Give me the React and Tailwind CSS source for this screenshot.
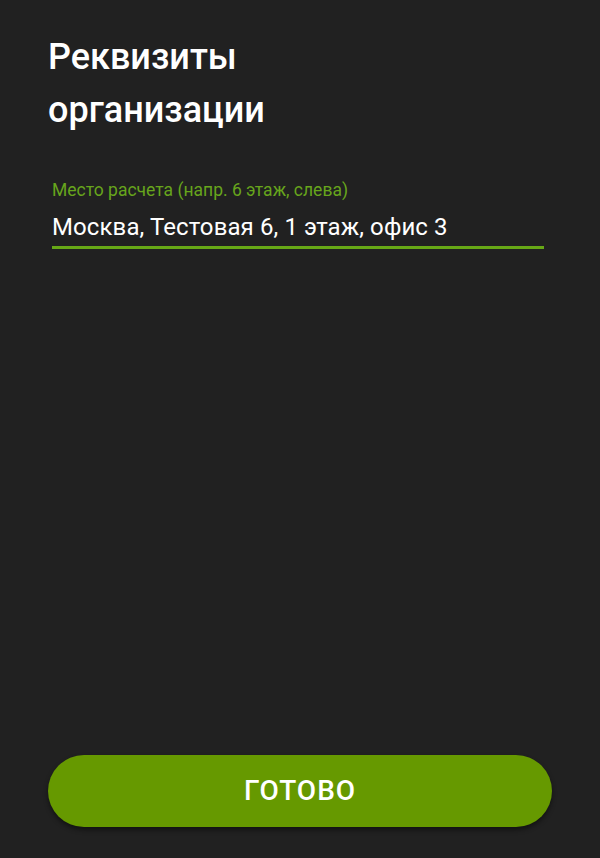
import React from 'react';

export default function App() {
  return (
    <div
      className="flex h-[858px] w-[600px] flex-col bg-[#212121] text-white"
      style={{ fontFamily: 'Roboto, "Noto Sans", sans-serif' }}
    >
      {/* Header */}
      <h1 className="pl-[48px] pt-[31px] text-[36px] font-medium leading-[53px]">
        Реквизиты
        <br />
        организации
      </h1>

      {/* Text field */}
      <div className="ml-[52px] mr-[56px] mt-[43px] flex flex-col">
        <label className="text-[17.5px] leading-[20px] text-[#67a51c]">
          Место расчета (напр. 6 этаж, слева)
        </label>
        <div className="mt-[11px] text-[24px] leading-[32px] tracking-[0.1px] text-white">
          Москва, Тестовая 6, 1 этаж, офис 3
        </div>
        <div className="mt-[3px] h-[3px] bg-[#67a816]" />
      </div>

      {/* Done button */}
      <button className="mx-[48px] mb-[31px] mt-auto h-[72px] rounded-full bg-[#669900] text-[28px] font-medium tracking-[1px] text-white shadow-[0_3px_5px_rgba(0,0,0,0.45)]">
        ГОТОВО
      </button>
    </div>
  );
}
